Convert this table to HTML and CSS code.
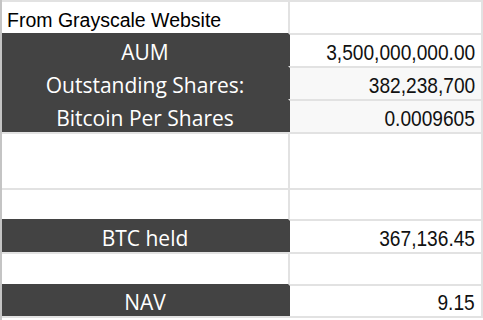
FILE: index.html
```html
<!DOCTYPE html>
<html>
<head>
<meta charset="utf-8">
<link rel="stylesheet" href="styles.css">
</head>
<body>
<div class="sheet">
  <div class="row r33">
    <div class="cl"><span class="head">From Grayscale Website</span></div>
    <div class="cr"></div>
  </div>
  <div class="row r33">
    <div class="cl dark"><span class="lab">AUM</span></div>
    <div class="cr dk"><span class="num">3,500,000,000.00</span></div>
  </div>
  <div class="row r33">
    <div class="cl dark"><span class="lab">Outstanding Shares:</span></div>
    <div class="cr dk shade"><span class="num">382,238,700</span></div>
  </div>
  <div class="row r33">
    <div class="cl dark"><span class="lab">Bitcoin Per Shares</span></div>
    <div class="cr dk shade"><span class="num">0.0009605</span></div>
  </div>
  <div class="row r56">
    <div class="cl"></div>
    <div class="cr"></div>
  </div>
  <div class="row r31">
    <div class="cl"></div>
    <div class="cr"></div>
  </div>
  <div class="row r33">
    <div class="cl dark"><span class="lab">BTC held</span></div>
    <div class="cr dk"><span class="num">367,136.45</span></div>
  </div>
  <div class="row r32">
    <div class="cl"></div>
    <div class="cr"></div>
  </div>
  <div class="row r32">
    <div class="cl dark"><span class="lab">NAV</span></div>
    <div class="cr dk"><span class="num">9.15</span></div>
  </div>
  <div class="endline"></div>
  <div class="marker"></div>
</div>
</body>
</html>
```

FILE: styles.css
```css
html, body {
  margin: 0;
  padding: 0;
  background: #ffffff;
}
.sheet {
  position: relative;
  width: 481px;
  height: 320px;
  border-left: 2px solid #c4c4c4;
  overflow: hidden;
}
.row {
  display: flex;
}
.r33 { height: 33px; }
.r56 { height: 56px; }
.r31 { height: 31px; }
.r32 { height: 32px; }
.cl, .cr {
  display: flex;
  align-items: flex-end;
  border-top: 2px solid #e2e2e2;
}
.cl {
  width: 286px;
}
.cr {
  width: 191px;
  border-left: 2px solid #e2e2e2;
  border-right: 2px solid #e2e2e2;
  justify-content: flex-end;
}
.dark {
  background: #434343;
  border-top-color: #434343;
  justify-content: center;
}
.cr.dk {
  border-left-color: #434343;
}
.shade {
  background: #f8f8f8;
}
.head {
  font-family: "Liberation Sans", Arial, sans-serif;
  font-size: 19.5px;
  line-height: 22px;
  color: #000;
  padding: 0 0 2px 5px;
}
.lab {
  font-family: "Open Sans", sans-serif;
  font-size: 21px;
  line-height: 24px;
  color: #fff;
  padding-bottom: 2px;
}
.num {
  display: inline-block;
  font-family: "Liberation Sans", Arial, sans-serif;
  font-size: 22px;
  line-height: 24px;
  color: #111;
  padding: 0 7px 1px 0;
  transform: scaleX(0.87);
  transform-origin: right bottom;
}
.endline {
  height: 2px;
  background: #e2e2e2;
}
.marker {
  position: absolute;
  left: -2px;
  top: 246px;
  width: 2px;
  height: 8px;
  background: #4285f4;
}
```
